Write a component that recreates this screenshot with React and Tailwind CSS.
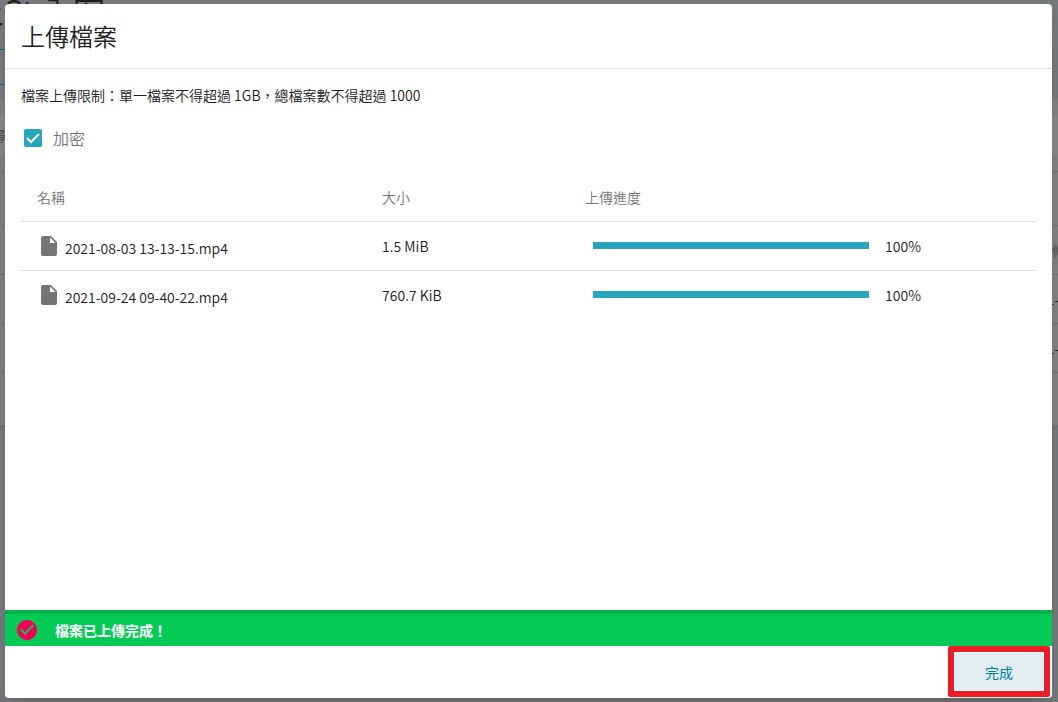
import React from 'react'

const FILES = [
  { name: '2021-08-03 13-13-15.mp4', size: '1.5 MiB', progress: 100 },
  { name: '2021-09-24 09-40-22.mp4', size: '760.7 KiB', progress: 100 },
]

const FileIcon = () => (
  <svg viewBox="0 0 24 24" className="h-6 w-6 fill-[#757575]" aria-hidden="true">
    <path d="M6 2c-1.1 0-1.99.9-1.99 2L4 20c0 1.1.89 2 1.99 2H18c1.1 0 2-.9 2-2V8l-6-6H6zm7 7V3.5L18.500 9H13z" />
  </svg>
)

const DoneIcon = () => (
  <svg viewBox="0 0 24 24" className="h-6 w-6 fill-[#f50057]" aria-hidden="true">
    <path d="M12 2C6.480 2 2 6.480 2 12s4.480 10 10 10 10-4.480 10-10S17.520 2 12 2zm-2 15l-5-5 1.410-1.410L10 14.170l7.590-7.590L19 8l-9 9z" />
  </svg>
)

// The file list page that stays visible around the dialog
const PageBehind = () => (
  <div aria-hidden="true" className="absolute inset-0 overflow-hidden bg-[#76797c] text-[#1c1c1c]">
    <div className="-ml-7 h-[49px] whitespace-nowrap text-[32px] leading-5">上St 入密</div>
    <div className="h-9 w-1/2 border-y border-[#17626e]" />
    <div className="mt-[14px] h-[326px] bg-[#808080] shadow-md">
      <div className="h-[73px] border-b border-[#6f6f6f] py-4">
        <div className="-ml-2 flex h-10 items-center bg-[#868686] text-sm text-[#4a4a4a]">尋</div>
      </div>
      <div className="h-[54px] border-b border-[#6f6f6f]" />
      <div className="flex h-[49px] items-center justify-end border-b border-[#6f6f6f] text-sm text-[#4a4a4a]">
        <span className="-mr-2">修</span>
      </div>
      <div className="flex h-[49px] items-center justify-end border-b border-[#6f6f6f] text-sm">
        <span className="-mr-px">1-</span>
      </div>
      <div className="flex h-[49px] items-center justify-end border-b border-[#6f6f6f] text-sm">
        <span className="-mr-px">1-</span>
      </div>
    </div>
  </div>
)

const Progress = ({ value }) => (
  <div className="flex items-center gap-4 pl-2">
    <div className="h-[7px] w-[276px] bg-[#bde1e8]">
      <div className="h-full bg-[#26a5bc]" style={{ width: `${value}%` }} />
    </div>
    <span>{value}%</span>
  </div>
)

export default function App() {
  return (
    <div className="relative h-screen p-1 pr-[6px] pl-[5px] font-['Noto_Sans_CJK_TC',sans-serif] text-sm font-[350] text-[#212121]">
      <PageBehind />

      <div
        role="dialog"
        aria-labelledby="upload-title"
        className="relative flex h-full flex-col overflow-hidden rounded-sm bg-white shadow-xl"
      >
        <header className="flex h-[65px] shrink-0 items-center border-b border-[#e0e0e0] px-4">
          <h1 id="upload-title" className="text-2xl font-[350]">
            上傳檔案
          </h1>
        </header>

        <main className="flex-1 px-4 pt-4">
          <p>檔案上傳限制：單一檔案不得超過 1GB，總檔案數不得超過 1000</p>

          <label className="mt-4 mb-[18px] flex h-[34px] w-fit items-center gap-[11px] text-base text-[#757575]">
            <span className="grid pl-[3px]">
              <input
                type="checkbox"
                defaultChecked
                className="col-start-1 row-start-1 h-[18px] w-[18px] appearance-none rounded-xs bg-[#26a5bc]"
              />
              <svg viewBox="0 0 18 18" className="pointer-events-none col-start-1 row-start-1 h-[18px] w-[18px]">
                <path d="M3 9l4 4 8-8" fill="none" stroke="#fff" strokeWidth="2" />
              </svg>
            </span>
            加密
          </label>

          <table className="w-full table-fixed text-left">
            <thead>
              <tr className="h-12 border-b border-[#e0e0e0] text-[#757575]">
                <th className="w-[34%] px-4 font-[350]">名稱</th>
                <th className="w-1/5 px-4 font-[350]">大小</th>
                <th className="px-4 font-[350]">上傳進度</th>
              </tr>
            </thead>
            <tbody>
              {FILES.map((file) => (
                <tr key={file.name} className="h-[49px] border-b border-[#e0e0e0] last:border-0">
                  <td className="px-4">
                    <div className="flex items-center gap-1">
                      <FileIcon />
                      <span className="pt-1">{file.name}</span>
                    </div>
                  </td>
                  <td className="px-4">{file.size}</td>
                  <td className="px-4">
                    <Progress value={file.progress} />
                  </td>
                </tr>
              ))}
            </tbody>
          </table>
        </main>

        <div
          role="status"
          className="flex h-9 shrink-0 items-center gap-4 border-t-4 border-[#03b348] bg-[#03cb55] px-[10px] font-bold text-white"
        >
          <DoneIcon />
          檔案已上傳完成！
        </div>

        <footer className="flex shrink-0 justify-end px-[2px] pb-px">
          <div className="rounded-xs border-[6px] border-[#ed1c24] p-px">
            <button type="button" className="h-[37px] w-[88px] rounded-sm bg-[#e0edf2] font-normal text-[#00819b]">
              完成
            </button>
          </div>
        </footer>
      </div>
    </div>
  )
}
